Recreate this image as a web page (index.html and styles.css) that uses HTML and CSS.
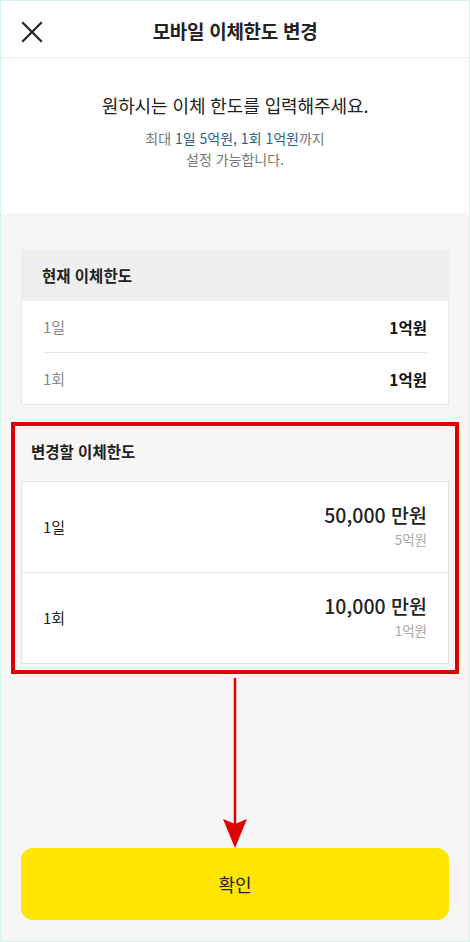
FILE: index.html
```html
<!DOCTYPE html>
<html lang="ko">
<head>
<meta charset="utf-8">
<title>모바일 이체한도 변경</title>
<link rel="stylesheet" href="styles.css">
</head>
<body>
<div class="app">
  <header class="topbar">
    <button class="close" aria-label="닫기">
      <svg width="22" height="22" viewBox="0 0 22 22"><path d="M2 2 L20 20 M20 2 L2 20" stroke="#222" stroke-width="2.2" stroke-linecap="square" fill="none"/></svg>
    </button>
    <h1 class="title">모바일 이체한도 변경</h1>
    <span class="spacer"></span>
  </header>

  <section class="intro">
    <p class="intro-main">원하시는 이체 한도를 입력해주세요.</p>
    <p class="intro-sub">최대 <span class="blue">1일 5억원, 1회 1억원</span>까지</p>
    <p class="intro-sub second">설정 가능합니다.</p>
  </section>

  <main class="content">
    <div class="card current">
      <div class="card-head">현재 이체한도</div>
      <div class="row-simple"><span class="lbl">1일</span><span class="val">1억원</span></div>
      <div class="row-simple"><span class="lbl">1회</span><span class="val">1억원</span></div>
    </div>

    <div class="change">
      <div class="change-head">변경할 이체한도</div>
      <div class="card edit">
        <div class="row-edit">
          <span class="lbl-dark">1일</span>
          <div class="amount"><span class="amt">50,000 만원</span><span class="hint">5억원</span></div>
        </div>
        <div class="row-edit">
          <span class="lbl-dark">1회</span>
          <div class="amount"><span class="amt">10,000 만원</span><span class="hint">1억원</span></div>
        </div>
      </div>
    </div>

    <svg class="arrow" width="30" height="172" viewBox="0 0 30 172">
      <line x1="15" y1="0" x2="15" y2="150" stroke="#e00000" stroke-width="2.5"/>
      <path d="M3 141 L15 146 L27 141 L15 170 Z" fill="#e00000"/>
    </svg>

    <div class="footer">
      <button class="confirm">확인</button>
    </div>
  </main>
</div>
</body>
</html>
```

FILE: styles.css
```css
* { box-sizing: border-box; }
html, body { margin: 0; padding: 0; }
body {
  font-family: "Noto Sans CJK KR", "Noto Sans", sans-serif;
  color: #222;
}
.app {
  width: 470px;
  height: 942px;
  border: 1px solid #d6f3eb;
  background: #f6f6f6;
  display: flex;
  flex-direction: column;
  overflow: hidden;
}
.topbar {
  height: 57px;
  flex: none;
  background: #fff;
  border-bottom: 1px solid #ececec;
  display: grid;
  grid-template-columns: 60px 1fr 60px;
  align-items: center;
}
.close {
  border: 0;
  background: none;
  padding: 0 0 0 20px;
  margin-top: 5px;
  display: flex;
  align-items: center;
  cursor: pointer;
}
.title {
  margin: 3px 0 0;
  text-align: center;
  font-size: 19px;
  font-weight: 700;
  color: #222;
  letter-spacing: -0.3px;
}
.intro {
  flex: none;
  background: #fff;
  height: 155px;
  padding-top: 34px;
  text-align: center;
}
.intro-main {
  margin: 0;
  font-size: 18px;
  line-height: 26px;
  color: #222;
  letter-spacing: -0.1px;
}
.intro-sub {
  margin: 10px 0 0;
  font-size: 14px;
  line-height: 20.5px;
  color: #777;
}
.intro-sub.second { margin-top: 0; }
.blue { color: #2b5f8c; }
.content {
  flex: 1;
  position: relative;
  padding: 36px 20px 0;
  display: flex;
  flex-direction: column;
}
.card {
  background: #fff;
  border: 1px solid #e8e8e8;
}
.card-head {
  height: 52px;
  background: #efefef;
  padding-left: 21px;
  display: flex;
  align-items: center;
  font-size: 15.5px;
  font-weight: 700;
  margin: -1px -1px 0;
}
.row-simple {
  height: 51px;
  margin: 0 21px;
  display: flex;
  justify-content: space-between;
  align-items: center;
}
.row-simple + .row-simple { border-top: 1px solid #e6e6e6; height: 52px; }
.lbl { font-size: 15px; color: #888; }
.val { font-size: 15.5px; font-weight: 700; color: #111; }
.change {
  position: relative;
  margin: 17px -10px 0;
  padding: 18px 10px 10px;
}
.change::after {
  content: "";
  position: absolute;
  inset: 0;
  border: 4px solid #e10000;
  pointer-events: none;
}
.change-head {
  padding-left: 10px;
  font-size: 15.5px;
  font-weight: 700;
  line-height: 22px;
  margin-bottom: 19px;
}
.card.edit { border-color: #e3e3e3; }
.row-edit {
  height: 90px;
  padding: 0 21px;
  display: flex;
  justify-content: space-between;
  align-items: center;
}
.row-edit + .row-edit { border-top: 1px solid #e8e8e8; height: 91px; }
.lbl-dark { font-size: 15px; color: #222; margin-top: -2px; }
.amount {
  display: flex;
  flex-direction: column;
  align-items: flex-end;
  margin-top: -4px;
}
.amt { font-size: 19.5px; font-weight: 500; line-height: 25px; color: #222; }
.hint { font-size: 13.5px; line-height: 18px; color: #aaa; margin-top: 3px; }
.arrow {
  position: absolute;
  left: 219px;
  top: 465px;
}
.footer {
  margin-top: auto;
  padding-bottom: 21px;
}
.confirm {
  width: 100%;
  height: 72px;
  border: 0;
  border-radius: 12px;
  background: #ffe500;
  font-family: "Noto Sans CJK KR", "Noto Sans", sans-serif;
  font-size: 18px;
  color: #222;
  cursor: pointer;
}
```
